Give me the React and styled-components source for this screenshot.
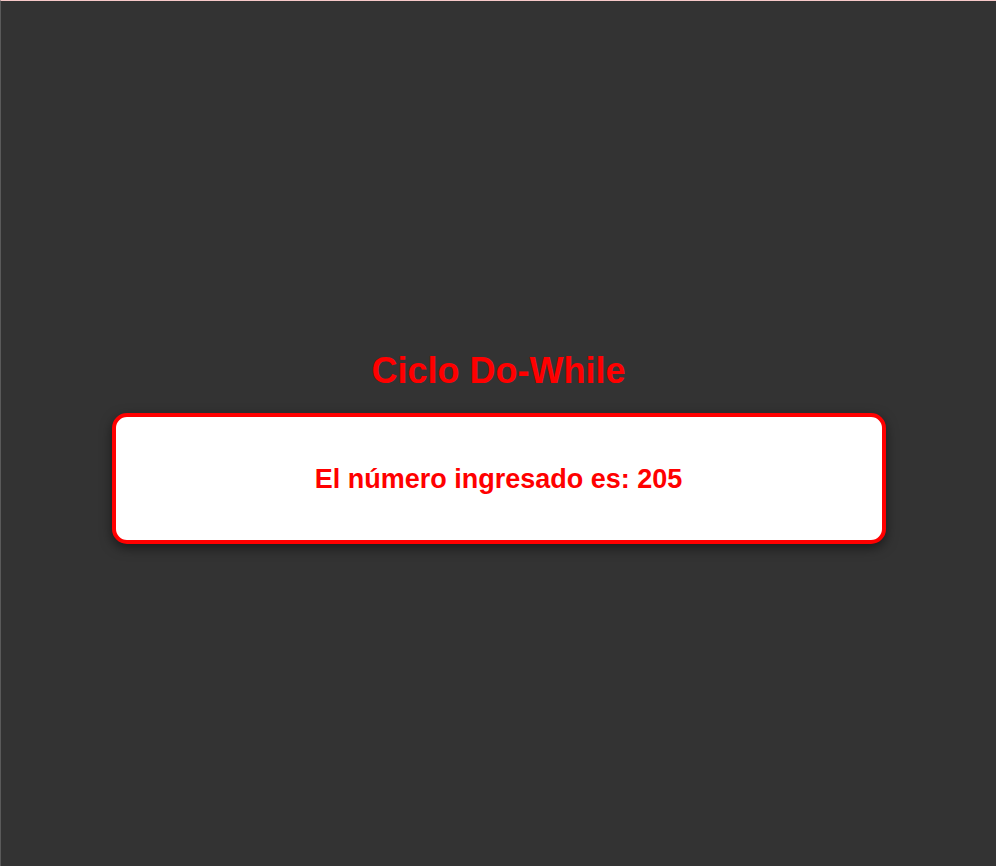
import React from "react";
import styled, { createGlobalStyle } from "styled-components";

const GlobalStyle = createGlobalStyle`
  html, body {
    margin: 0;
    padding: 0;
    background-color: #333333;
  }
  body {
    font-family: "Liberation Sans", Arial, sans-serif;
  }
`;

export default function App() {
  return (
    <>
      <GlobalStyle />
      <Page>
        <Title>Ciclo Do-While</Title>
        <Card>
          <Message>El número ingresado es: 205</Message>
        </Card>
      </Page>
    </>
  );
}

const Page = styled.div`
  min-height: 866px;
  box-sizing: border-box;
  background-color: #333333;
  border-top: 1px solid #f7c9c9;
  border-left: 1px solid #5a5a5a;
  display: flex;
  flex-direction: column;
  align-items: center;
  padding-top: 349px;
`;

const Title = styled.h1`
  margin: 0 0 22px;
  color: #ff0000;
  font-size: 36px;
  font-weight: bold;
  line-height: 41px;
  text-align: center;
`;

const Card = styled.div`
  width: 774px;
  box-sizing: border-box;
  background-color: #ffffff;
  border: 4px solid #ff0000;
  border-radius: 15px;
  box-shadow: 0 4px 12px rgba(0, 0, 0, 0.5);
  padding: 47px 20px 45px;
  text-align: center;
`;

const Message = styled.p`
  margin: 0;
  color: #ff0000;
  font-size: 27px;
  font-weight: bold;
  line-height: 31px;
`;
